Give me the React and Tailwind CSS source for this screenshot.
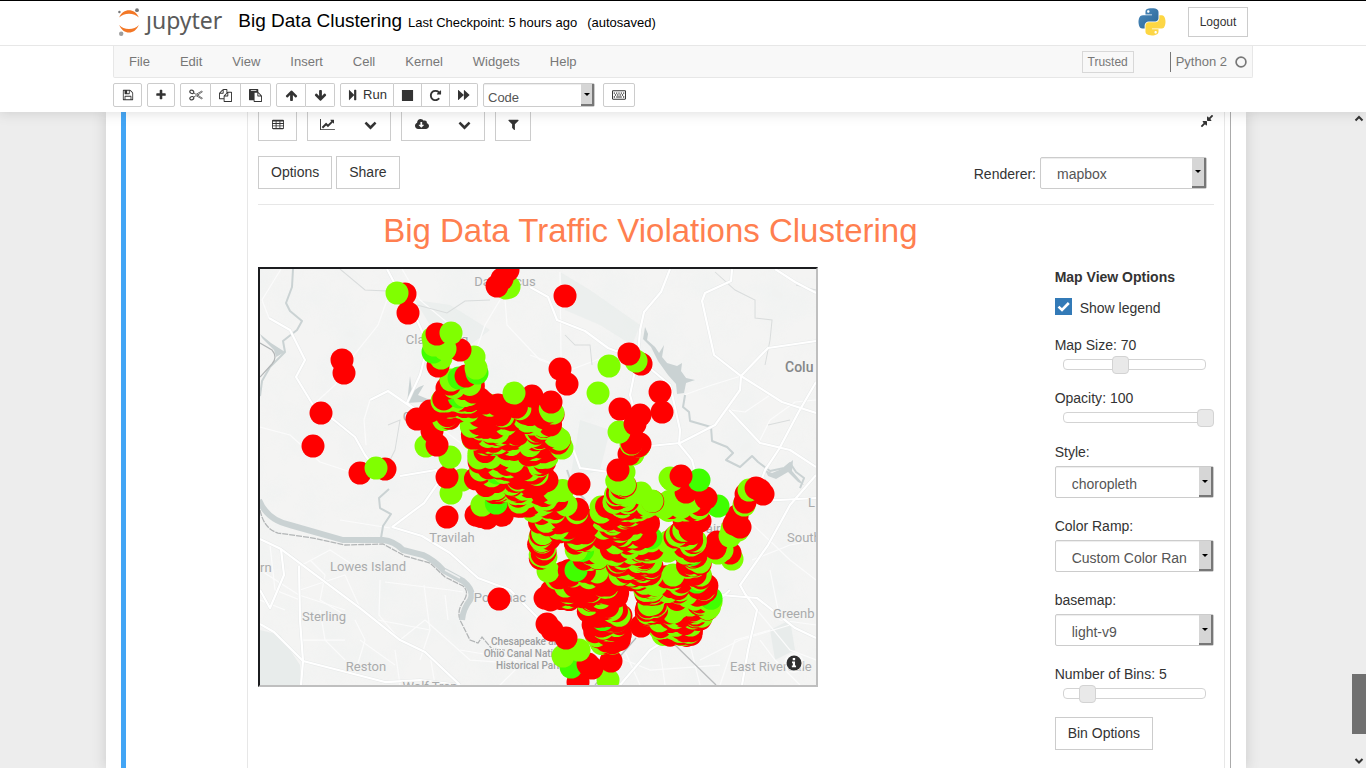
import React, { useState } from "react";
import { FaCloudDownloadAlt, FaCompressAlt, FaRegKeyboard } from "react-icons/fa";

/* ---------- icons ---------- */

const PATHS = {
  save: "M512 1536h768v-384h-768v384zm896 0h128v-896q0-14-10-38.5t-20-34.5l-281-281q-10-10-34-20t-39-10v416q0 40-28 68t-68 28h-576q-40 0-68-28t-28-68v-416h-128v1280h128v-416q0-40 28-68t68-28h832q40 0 68 28t28 68v416zm-384-928v-320q0-13-9.5-22.5t-22.5-9.5h-192q-13 0-22.5 9.5t-9.5 22.5v320q0 13 9.5 22.5t22.5 9.5h192q13 0 22.5-9.5t9.5-22.5zm640 32v928q0 40-28 68t-68 28h-1344q-40 0-68-28t-28-68v-1344q0-40 28-68t68-28h928q40 0 88 20t76 48l280 280q28 28 48 76t20 88z",
  plus: "M1600 736v192q0 40-28 68t-68 28h-416v416q0 40-28 68t-68 28h-192q-40 0-68-28t-28-68v-416h-416q-40 0-68-28t-28-68v-192q0-40 28-68t68-28h416v-416q0-40 28-68t68-28h192q40 0 68 28t28 68v416h416q40 0 68 28t28 68z",
  copy: "M1696 384q40 0 68 28t28 68v1216q0 40-28 68t-68 28h-960q-40 0-68-28t-28-68v-288h-544q-40 0-68-28t-28-68v-672q0-40 20-88t48-76l408-408q28-28 76-48t88-20h416q40 0 68 28t28 68v328q68-40 128-40h416zm-544 213l-299 299h299v-299zm-640-384l-299 299h299v-299zm196 647l316-316v-416h-384v416q0 40-28 68t-68 28h-416v640h512v-256q0-40 20-88t48-76zm956 804v-1152h-384v416q0 40-28 68t-68 28h-416v640h896z",
  paste: "M768 1664h896v-640h-416q-40 0-68-28t-28-68v-416h-384v1152zm256-1440v-64q0-13-9.5-22.5t-22.5-9.5h-704q-13 0-22.5 9.5t-9.5 22.5v64q0 13 9.5 22.5t22.5 9.5h704q13 0 22.5-9.5t9.5-22.5zm256 672h299l-299-299v299zm512 128v672q0 40-28 68t-68 28h-960q-40 0-68-28t-28-68v-160h-544q-40 0-68-28t-28-68v-1344q0-40 28-68t68-28h1088q40 0 68 28t28 68v328q21 13 36 28l408 408q28 28 48 76t20 88z",
  up: "M1675 971q0 51-37 90l-75 75q-38 38-91 38-54 0-90-38l-294-293v704q0 52-37.5 84.5t-90.5 32.5h-128q-53 0-90.5-32.5t-37.5-84.5v-704l-294 293q-36 38-90 38t-90-38l-75-75q-38-38-38-90 0-53 38-91l651-651q35-37 90-37 54 0 91 37l651 651q37 39 37 91z",
  down: "M1675 832q0 53-37 90l-651 652q-39 37-91 37-53 0-90-37l-651-652q-38-36-38-90 0-53 38-91l74-75q39-37 91-37 53 0 90 37l294 294v-704q0-52 38-90t90-38h128q52 0 90 38t38 90v704l294-294q37-37 90-37 52 0 91 37l75 75q37 39 37 91z",
  step: "M350 150L1060 860V192q0-64 64-64h200q64 0 64 64v1408q0 64-64 64h-200q-64 0-64-64V932L350 1642q-60 50-60-20V170q0-70 60-20z",
  stop: "M1664 192v1408q0 26-19 45t-45 19h-1408q-26 0-45-19t-19-45v-1408q0-26 19-45t45-19h1408q26 0 45 19t19 45z",
  repeat: "M1664 256v448q0 26-19 45t-45 19h-448q-42 0-59-40-17-39 14-69l138-138q-148-137-349-137-104 0-198.5 40.5t-163.5 109.5-109.5 163.5-40.5 198.5 40.5 198.5 109.5 163.5 163.5 109.5 198.5 40.5q119 0 225-52t179-147q7-10 23-12 15 0 25 9l137 138q9 8 9.5 20.5t-7.5 22.5q-109 132-264 204.5t-327 72.5q-156 0-298-61t-245-164-164-245-61-298 61-298 164-245 245-164 298-61q147 0 284.5 55.5t244.5 156.5l130-129q29-31 70-14 39 17 39 59z",
  forward: "M60 150L880 880V170q0-60 50-20L1700 850q50 46 0 92L930 1642q-50 40-50-20V912L60 1642q-60 40-60-20V170q0-60 60-20z",
  table: "M160 256h1472q160 0 160 160v1088q0 160-160 160H160q-160 0-160-160V416q0-160 160-160zM128 540v210h420V540zm548 0v210h440V540zm568 0v210h420V540zM128 878v230h420V878zm548 0v230h440V878zm568 0v230h420V878zM128 1236v260h420v-260zm548 0v260h440v-260zm568 0v260h420v-260z",
  chevron: "M1683 808l-742 741q-19 19-45 19t-45-19l-742-741q-19-19-19-45.5t19-45.5l166-165q19-19 45-19t45 19l531 531 531-531q19-19 45-19t45 19l166 165q19 19 19 45.5t-19 45.5z",
  filter: "M1595 295q17 41-14 70l-493 493v742q0 42-39 59-13 5-25 5-27 0-45-19l-256-256q-19-19-19-45v-486l-493-493q-31-29-14-70 17-39 59-39h1280q42 0 59 39z",
};

function Icon({ name, className = "size-3" }) {
  return (
    <svg viewBox="0 0 1792 1792" className={className} fill="currentColor" fillRule="evenodd" aria-hidden="true">
      <path d={PATHS[name]} />
    </svg>
  );
}

function ScissorsIcon() {
  return (
    <svg viewBox="0 0 14 12" className="h-3 w-[14px]" fill="none" stroke="#444" aria-hidden="true">
      <ellipse cx="2.8" cy="2.8" rx="2" ry="1.6" strokeWidth="1.2" transform="rotate(25 2.8 2.8)" />
      <ellipse cx="2.8" cy="9.2" rx="2" ry="1.6" strokeWidth="1.2" transform="rotate(-25 2.8 9.2)" />
      <path d="M4.6 3.8L7 5.4l5.6-3.2.8.5L8 6.6M4.6 8.2L7 6.6l5.6 3.2.8-.5L8 5.6" strokeWidth=".8" />
    </svg>
  );
}

function LineChartIcon() {
  return (
    <svg viewBox="0 0 2048 1792" className="h-[13px] w-[15px]" fill="currentColor" aria-hidden="true">
      <path d="M2048 1536v128h-2048v-1536h128v1408h1920zm-128-1248v435q0 21-19.5 29.5t-35.5-7.5l-121-121-633 633q-10 10-23 10t-23-10l-233-233-416 416-192-192 585-585q10-10 23-10t23 10l233 233 464-464-121-121q-16-16-7.5-35.5t29.5-19.5h435q14 0 23 9t9 23z" />
    </svg>
  );
}

function JupyterMark() {
  return (
    <svg viewBox="0 0 24 30" className="h-[30px] w-6" aria-hidden="true">
      <path d="M1.2 10.5C3.2 5.6 7 3.2 11 3.2s7.8 2.4 9.8 7.3C18.5 8 15 6.7 11 6.7S3.5 8 1.2 10.5z" fill="#f37726" />
      <path d="M1.2 18C3.2 23 7 25.6 11 25.6s7.8-2.6 9.8-7.6C18.5 20.6 15 22 11 22s-7.5-1.4-9.8-4z" fill="#f37726" />
      <circle cx="19" cy="3.2" r="1.9" fill="#767677" />
      <circle cx="1.4" cy="5" r="1.2" fill="#767677" />
      <circle cx="3.2" cy="26.7" r="2.2" fill="#9e9e9e" />
    </svg>
  );
}

function PythonLogo() {
  return (
    <svg viewBox="12 1 104 106" className="size-7" role="img" aria-label="Python">
      <defs>
        <linearGradient id="pyBlue" x1="0" y1="0" x2="1" y2="1">
          <stop offset="0" stopColor="#4b8bbe" />
          <stop offset="1" stopColor="#2b6595" />
        </linearGradient>
        <linearGradient id="pyYellow" x1="0" y1="0" x2="1" y2="1">
          <stop offset="0" stopColor="#ffd93b" />
          <stop offset="1" stopColor="#fbd44c" />
        </linearGradient>
      </defs>
      <path fill="url(#pyBlue)" d="M63.391 1.988c-4.222.02-8.252.379-11.8 1.007-10.45 1.846-12.346 5.71-12.346 12.837v9.411h24.693v3.137H29.977c-7.176 0-13.46 4.313-15.426 12.521-2.268 9.405-2.368 15.275 0 25.096 1.755 7.311 5.947 12.519 13.124 12.519h8.491V67.234c0-8.151 7.051-15.34 15.426-15.34h24.665c6.866 0 12.346-5.654 12.346-12.548V15.833c0-6.693-5.646-11.72-12.346-12.837-4.244-.706-8.645-1.027-12.866-1.008zM50.037 9.557c2.55 0 4.634 2.117 4.634 4.721 0 2.593-2.083 4.69-4.634 4.69-2.56 0-4.633-2.097-4.633-4.69-.001-2.604 2.073-4.721 4.633-4.721z" />
      <path fill="url(#pyYellow)" d="M91.682 28.38v10.966c0 8.5-7.208 15.655-15.426 15.655H51.591c-6.756 0-12.346 5.783-12.346 12.549v23.515c0 6.691 5.818 10.628 12.346 12.547 7.816 2.297 15.312 2.713 24.665 0 6.216-1.801 12.346-5.423 12.346-12.547v-9.412H63.938v-3.138h37.012c7.176 0 9.852-5.005 12.348-12.519 2.578-7.735 2.467-15.174 0-25.096-1.774-7.145-5.161-12.521-12.348-12.521h-9.268zM77.809 87.927c2.561 0 4.634 2.097 4.634 4.692 0 2.602-2.074 4.719-4.634 4.719-2.55 0-4.633-2.117-4.633-4.719 0-2.595 2.083-4.692 4.633-4.692z" />
    </svg>
  );
}

/* ---------- map ---------- */

const R = "#ff0000";
const G = "#80ff00";
const B = "#40ff00";

// [yTop, yBottom, leftTop, rightTop, leftBottom, rightBottom, count, share of red]
const BANDS = [
  [384, 402, 448, 474, 440, 482, 14, 0.5],
  [398, 420, 440, 488, 432, 500, 30, 0.7],
  [420, 445, 470, 500, 472, 520, 26, 0.7],
  [404, 425, 500, 515, 500, 550, 14, 0.7],
  [408, 430, 548, 554, 535, 552, 14, 0.5],
  [430, 452, 475, 558, 474, 562, 48, 0.55],
  [452, 475, 474, 548, 474, 545, 46, 0.55],
  [475, 495, 470, 545, 475, 555, 36, 0.55],
  [486, 505, 480, 566, 515, 567, 24, 0.65],
  [503, 517, 478, 540, 480, 570, 22, 0.8],
  [517, 560, 535, 550, 540, 550, 26, 0.5],
  [505, 560, 540, 585, 580, 602, 44, 0.55],
  [480, 522, 616, 626, 612, 632, 36, 0.5],
  [505, 530, 600, 650, 600, 648, 34, 0.6],
  [500, 512, 645, 705, 645, 700, 18, 0.35],
  [528, 550, 598, 650, 600, 655, 36, 0.55],
  [550, 580, 612, 650, 615, 640, 40, 0.6],
  [570, 600, 562, 600, 545, 625, 48, 0.88],
  [585, 605, 560, 625, 570, 615, 28, 0.7],
  [548, 580, 638, 652, 640, 652, 44, 0.5],
  [580, 615, 644, 656, 646, 658, 44, 0.55],
  [606, 644, 585, 622, 598, 620, 60, 0.72],
  [610, 636, 648, 706, 664, 690, 56, 0.6],
  [598, 620, 694, 712, 690, 708, 22, 0.65],
  [570, 600, 692, 704, 698, 710, 22, 0.75],
  [530, 572, 680, 694, 688, 702, 34, 0.5],
  [576, 600, 660, 690, 664, 688, 16, 0.5],
];

// Individually placed points: [x, y, colour].
const POINTS = [
  [438, 366, R], [433, 338, G], [433, 352, B], [441, 358, G], [434, 345, G], [445, 349, G],
  [450, 384, R], [455, 400, G], [442, 401, G], [464, 402, G], [430, 411, R], [417, 419, R], [432, 431, R],
  [426, 446, G], [437, 445, R], [450, 457, G], [451, 493, G], [462, 480, G], [447, 477, R], [447, 517, R],
  [476, 515, R], [487, 518, R], [545, 552, R], [548, 571, G], [556, 578, G],
  [545, 598, R], [547, 624, R], [552, 630, R], [566, 638, R], [563, 656, G], [579, 650, G], [571, 667, B],
  [578, 682, R], [588, 664, R], [592, 668, R], [611, 661, R], [608, 680, G],
  [641, 626, R], [641, 493, G], [652, 501, G], [601, 507, G], [601, 512, G], [670, 504, G],
  [668, 542, G], [668, 551, G], [673, 575, G], [686, 510, G], [684, 520, R], [700, 521, R], [690, 529, R], [677, 535, G],
  [675, 537, R], [691, 539, R], [691, 545, G], [692, 551, R], [693, 556, G],
  [718, 506, B], [706, 498, R], [699, 480, B], [670, 478, G], [672, 480, G], [686, 492, R], [681, 476, R],
  [405, 294, R], [408, 313, R], [397, 293, G], [565, 296, R],
  [342, 360, R], [344, 373, R], [321, 413, R], [313, 446, R],
  [360, 473, R], [385, 469, R], [376, 468, G], [499, 599, R],
  [437, 334, R], [460, 350, R], [451, 333, G], [474, 357, G],
  [477, 373, B], [459, 378, B], [451, 380, G], [466, 376, R], [476, 368, G],
  [506, 288, G], [509, 287, G], [497, 286, R], [502, 279, R], [508, 270, R],
  [560, 369, R], [567, 384, R], [532, 396, R], [514, 393, G], [553, 413, G], [551, 402, R],
  [503, 416, G], [498, 405, R], [512, 401, R], [527, 421, G], [532, 424, G], [558, 443, R], [562, 448, G], [579, 484, R],
  [609, 366, G], [598, 393, G], [641, 364, R], [636, 361, G], [629, 354, R],
  [660, 392, R], [662, 412, R], [620, 409, R], [619, 432, G], [640, 415, R], [635, 424, R],
  [640, 444, R], [639, 446, G], [638, 446, R], [633, 454, G], [629, 454, R], [632, 443, R], [631, 444, G], [624, 472, G], [618, 470, R],
  [732, 559, G], [730, 553, R], [718, 553, G], [715, 548, R], [722, 550, G], [738, 530, G], [740, 527, R],
  [717, 542, R], [730, 536, G], [734, 524, R], [732, 529, G], [737, 516, R], [744, 505, G], [745, 502, R],
  [746, 494, R], [749, 490, G], [763, 494, R], [760, 490, R], [756, 488, R],
  [690, 605, G], [679, 607, G],
];

function makeRandom(seed) {
  let s = seed;
  return () => {
    s = (s * 1664525 + 1013904223) % 4294967296;
    return s / 4294967296;
  };
}

// Points are painted from south to north, so the northern ones stay on top.
function buildCluster() {
  const rnd = makeRandom(42);
  const out = [...POINTS];
  BANDS.forEach(([y0, y1, l0, r0, l1, r1, n, red]) => {
    for (let i = 0; i < n; i++) {
      const t = rnd();
      const l = l0 + (l1 - l0) * t;
      const r = r0 + (r1 - r0) * t;
      const c = rnd();
      out.push([l + (r - l) * rnd(), y0 + (y1 - y0) * t, c < red ? R : c > 0.985 ? B : G]);
    }
  });
  return out.sort((a, b) => b[1] - a[1]);
}

const CLUSTER = buildCluster();

const STREAMS = [
  "M293 269L292 287L286 303L290 311L302 321L297 330L283 341L285 352L270 367L262 381L260 396",
  "M685 395L683 407L689 412L690 421L711 427L712 441L727 447L733 453L726 460L740 467L752 456L758 462L770 471L784 468L790 463L796 472L804 478L800 488",
  "M389 489L379 498L380 508L391 514L383 526L381 538",
  "M567 470L572 485L585 500",
];

const HIGHWAYS = [
  "M260 539L281 549L360 608L400 640L425 652L460 685",
  "M260 624L274 632L303 661L350 673L385 682L420 680L460 685",
  "M281 549L284 575L270 608L260 590",
  "M299 566L300 620L303 661L301 685",
  "M269 318L290 330L305 360L296 377L313 405L334 420L355 437L365 455L376 470",
  "M387 269L397 288L417 320L428 345L420 375L407 403L430 420",
  "M530 287L548 297L557 320L585 331L608 348L640 360L670 385L680 430L679 444L692 460L697 480",
  "M670 269L661 292L644 312L640 330L638 355L630 395L640 430",
  "M732 269L731 281L705 293L702 301L714 355L741 376L782 402L816 413",
  "M741 376L740 390L715 425L680 443L650 446L620 450",
  "M741 376L768 348L816 341",
  "M816 382L798 413L779 449L765 470L757 492",
  "M775 269L795 282L816 293",
  "M729 410L760 443L790 450L816 467",
  "M816 475L790 505L768 545L740 585L745 594L757 610L748 650L742 685",
  "M720 595L757 598L795 628L816 638",
  "M740 500L780 500L816 498",
  "M620 685L650 650L690 625L730 590",
  "M392 527L424 503L440 480L436 470L400 476",
  "M392 527L422 536L450 553L478 578L510 590L540 620",
  "M370 400L388 391L430 420",
  "M570 440L580 468L630 475",
];

const MINOR = [
  "M281 269L262 300L269 318",
  "M402 269L420 300L450 325",
  "M500 300L485 325L478 345L470 370",
  "M505 300L507 325L540 360L570 370",
  "M387 300L378 325L350 360L335 385L313 405",
  "M260 427L290 435L320 462L360 475",
  "M370 400L364 420L366 445",
  "M430 420L470 450L500 500",
  "M560 272L561 360",
  "M530 355L570 370L610 355",
  "M340 520L390 528",
  "M816 400L795 402L770 420L760 440",
  "M684 395L712 385L741 376",
  "M730 410L745 412L770 395",
  "M752 560L790 545L816 540",
  "M748 520L790 560L816 580",
  "M300 566L330 550L350 563",
  "M300 590L345 575L360 608",
  "M355 620L365 640L355 673",
  "M260 570L299 595L345 610",
  "M378 620L430 630L420 660",
  "M380 580L379 615L400 640",
  "M424 585L430 630M445 595L448 620M385 582L450 590L463 592",
  "M400 640L425 620L470 660L540 665",
  "M490 640L520 665L500 685M460 650L520 660",
  "M560 640L600 685M620 640L640 685M660 650L665 685M690 645L700 685",
  "M540 655L600 650L650 670L720 665M720 685L735 640L770 630",
  "M770 570L780 620L816 625M757 610L790 650L816 660",
  "M760 640L775 660L800 685M700 660L740 640L790 625",
  "M320 610L325 640L345 660M303 640L345 640",
  "M270 545L275 590L300 600M260 600L285 610",
  "M395 650L400 685M430 655L435 685M360 640L395 665",
  "M310 560L325 575L320 600L345 615",
];

const BORDERS = [
  "M340 269L365 290L387 291M417 305L447 313L465 301L490 300",
  "M715 272L735 290L755 300L755 318L772 320L770 340L765 365",
  "M388 425L400 420L395 450L385 470M565 335L575 345L590 345L592 365",
  "M796 285L816 290M768 425L790 420",
];

const LABELS = [
  [505, 286, "Damascus", 13], [437, 344, "Clarksburg", 13], [452, 542, "Travilah", 13],
  [368, 571, "Lowes Island", 13], [324, 621, "Sterling", 13], [366, 671, "Reston", 13],
  [500, 602, "Potomac", 13], [430, 691, "Wolf Trap", 13], [440, 421, "Germantown", 13], [722, 533, "Fairland", 13],
];

function TrafficMap() {
  return (
    <svg
      viewBox="260 269 556 416"
      className="block h-auto w-full"
      role="img"
      aria-label="Traffic violations map"
      fontFamily="Roboto, 'Noto Sans', sans-serif"
    >
      <defs>
        <filter id="relief" x="0" y="0" width="100%" height="100%">
          <feTurbulence type="fractalNoise" baseFrequency="0.025" numOctaves="3" seed="4" />
          <feColorMatrix values="0 0 0 0 0.86  0 0 0 0 0.885  0 0 0 0 0.88  2.4 0 0 0 -0.95" />
        </filter>
      </defs>
      <rect x="260" y="269" width="556" height="416" fill="#f4f4f3" />
      <rect x="260" y="269" width="556" height="416" filter="url(#relief)" opacity="0.55" />
      <g fill="#e8eceb">
        <path d="M560 272L590 290L640 325L632 345L600 325L565 310z" opacity="0.7" />
        <path d="M415 300L450 305L490 330L470 345L430 325z" opacity="0.7" />
        <path d="M260 630L280 635L300 665L300 685H260z" />
        <path d="M770 630L790 620L795 650L775 660z" />
        <path d="M580 420L610 430L600 470L570 480z" opacity="0.7" />
      </g>
      <g fill="none" stroke="#fbfbfb" strokeWidth="1.2" strokeLinejoin="round">
        {MINOR.map((d) => <path key={d} d={d} />)}
      </g>
      <g fill="none" stroke="#d9dcdc" strokeWidth="1">
        {BORDERS.map((d) => <path key={d} d={d} />)}
      </g>
      <g fill="none" stroke="#cad2d3" strokeWidth="2" strokeLinejoin="round">
        {STREAMS.map((d) => <path key={d} d={d} />)}
      </g>
      <g fill="#cad2d3">
        <path d="M645 327L648 334L647 340L655 347L659 353L664 345L662 357L667 363L677 366L682 363L681 371L686 378L695 380L686 383L684 393L677 394L676 384L668 375L658 361L651 347L643 339z" />
        <path d="M260 334L271 343L285 352L276 357L274 350L262 338z" />
        <path d="M407 403L410 376L412 392L419 387L424 385L418 395L430 400L422 402z" />
        <path d="M765 470L772 473L784 468L793 460L792 471L804 485L798 482L788 472L776 479L768 476z" />
      </g>
      <path d="M260 510Q264 529 278 533L313 538L345 545L383 544L405 556L430 563L445 577L463 586Q470 592 463 602T461 622L470 640L478 643L482 637L492 649L505 650" fill="none" stroke="#b2b5b6" strokeWidth="1.3" strokeDasharray="6 1" />
      <path d="M259 500Q267 520 290 525L343 540L383 540Q394 541 403 550L423 555Q434 560 443 570L463 581Q475 591 470 600Q463 609 462 620" fill="none" stroke="#cad2d3" strokeWidth="6" />
      <path d="M445 570L460 578" stroke="#eff0f0" strokeWidth="1.5" />
      <g fill="none" stroke="#e7e9e9" strokeWidth="3.2" strokeLinejoin="round">
        {HIGHWAYS.map((d) => <path key={d} d={d} />)}
      </g>
      <g fill="none" stroke="#ffffff" strokeWidth="2.2" strokeLinejoin="round">
        {HIGHWAYS.map((d) => <path key={d} d={d} />)}
      </g>
      <path d="M675 645L716 685M636 638L595 685" stroke="#b9bbbc" strokeWidth="1.3" />
      <path d="M260 343L272 350Q278 357 272 364L260 377" fill="none" stroke="#b2b5b6" strokeWidth="1.2" />

      <g fill="#a9abac" textAnchor="middle" stroke="#f4f4f3" strokeWidth="2" paintOrder="stroke">
        {LABELS.map(([x, y, t, s]) => <text key={t} x={x} y={y} fontSize={s}>{t}</text>)}
      </g>
      <g fill="#a9abac" stroke="#f4f4f3" strokeWidth="2" paintOrder="stroke" fontSize="13">
        <text x="260" y="572">rn</text>
        <text x="808" y="507">L</text>
        <text x="787" y="542">South</text>
        <text x="773" y="618">Greenb</text>
        <text x="730" y="671">East Riverdale</text>
        <text x="785" y="372" fontSize="14" fontWeight="500" fill="#858788">Colu</text>
      </g>
      <g fill="#9c9ea0" textAnchor="middle" stroke="#f4f4f3" strokeWidth="2" paintOrder="stroke" fontSize="10" fontWeight="500">
        <text x="528" y="645">Chesapeake and</text>
        <text x="528" y="657">Ohio Canal National</text>
        <text x="529" y="669">Historical Park</text>
      </g>

      {CLUSTER.map(([x, y, c], i) => <circle key={i} cx={x} cy={y} r="11.5" fill={c} />)}

      <circle cx="794" cy="663" r="10" fill="#fff" opacity="0.5" />
      <circle cx="794" cy="663" r="7.5" fill="#2f2f2f" />
      <path d="M792 661.5h3v4h1v1.7h-4.2v-1.7h1v-2.4h-.8zM792.7 658h2.4v2.2h-2.4z" fill="#fff" />
    </svg>
  );
}

/* ---------- controls ---------- */

function ToolButton({ label, className, children }) {
  return (
    <button
      type="button"
      aria-label={label}
      className={`flex h-6 items-center justify-center border border-[#ccc] bg-white text-[#333] ${className}`}
    >
      {children}
    </button>
  );
}

function SelectBox({ id, label, options, className, textClass, arrowClass }) {
  return (
    <div className={`relative ${className}`}>
      <select
        id={id}
        aria-label={label}
        className={`block size-full appearance-none overflow-hidden rounded-xs border border-[#ccc] bg-white text-[#555] shadow-[inset_0_1px_1px_rgba(0,0,0,0.075)] ${textClass}`}
      >
        {options.map((o) => <option key={o}>{o}</option>)}
      </select>
      <span
        aria-hidden="true"
        className={`pointer-events-none absolute inset-y-px right-px flex items-center justify-center border-r-2 border-b-2 border-[#777] bg-[#d6d6d6] ${arrowClass}`}
      >
        <svg viewBox="0 0 6 3" className="h-[3px] w-[6px]"><path d="M0 0h6L3 3z" /></svg>
      </span>
    </div>
  );
}

const FIELD_TEXT = "pt-1 pr-[26px] pl-4 text-[14px]";

function SelectField({ id, label, options }) {
  return (
    <div className="flex flex-col gap-1">
      <label htmlFor={id} className="leading-5">{label}</label>
      <SelectBox id={id} options={options} className="h-8" textClass={FIELD_TEXT} arrowClass="w-[14px]" />
    </div>
  );
}

function SliderField({ id, label, value, max, text }) {
  const [current, setCurrent] = useState(value);
  return (
    <div className="flex flex-col">
      <label htmlFor={id} className="leading-5">{label}: {text(current)}</label>
      <div className="grid h-[19px] items-center">
        <span className="col-start-1 row-start-1 mx-2 h-[11px] rounded-[4px] border border-[#d3d3d3] bg-white" />
        <input
          id={id}
          type="range"
          min="0"
          max={max}
          value={current}
          onChange={(e) => setCurrent(Number(e.target.value))}
          className="col-start-1 row-start-1 h-[19px] w-full appearance-none bg-transparent [&::-webkit-slider-thumb]:h-[18px] [&::-webkit-slider-thumb]:w-[17px] [&::-webkit-slider-thumb]:appearance-none [&::-webkit-slider-thumb]:rounded-[4px] [&::-webkit-slider-thumb]:border [&::-webkit-slider-thumb]:border-[#d3d3d3] [&::-webkit-slider-thumb]:bg-[#e9e9e9]"
        />
      </div>
    </div>
  );
}

/* ---------- page sections ---------- */

const MENU = ["File", "Edit", "View", "Insert", "Cell", "Kernel", "Widgets", "Help"];

function Header() {
  return (
    <header className="relative z-10 border-t border-black bg-white pb-[5px] shadow-[0_0_12px_1px_rgba(87,87,87,0.2)]">
      <div className="border-b border-[#e7e7e7]">
        <div className="mx-auto flex h-11 max-w-[1140px] items-center pr-[5px] pb-[3px] pl-[5px]">
          <a href="#home" className="flex h-9 items-center gap-1 text-[#5a5a5a]" aria-label="jupyter">
            <JupyterMark />
            <span className="pb-1 font-['Noto_Sans',sans-serif] text-[23px] leading-8">ȷupyter</span>
          </a>
          <div className="ml-4 flex items-baseline text-black">
            <h1 className="text-[19px]">Big Data Clustering</h1>
            <span className="ml-[6px] text-[13px]">Last Checkpoint: 5 hours ago</span>
            <span className="ml-[10px] text-[13px]">(autosaved)</span>
          </div>
          <div className="ml-auto flex items-center gap-[22px]">
            <PythonLogo />
            <button type="button" className="h-[30px] w-[60px] border border-[#ccc] bg-white text-[12px] text-[#333]">Logout</button>
          </div>
        </div>
      </div>
      <div className="mx-auto max-w-[1140px]">
        <nav className="flex h-8 items-center rounded-b-xs border border-t-0 border-[#e7e7e7] bg-[#f8f8f8] text-[13px] text-[#777]">
          {MENU.map((m) => <a key={m} href={`#${m.toLowerCase()}`} className="px-[15px] pt-px">{m}</a>)}
          <span className="ml-auto flex h-[22px] w-[52px] items-center justify-center border border-[#d8d8d8] text-[12px]">Trusted</span>
          <span className="ml-9 flex h-5 items-center gap-2 border-l border-[#777] pr-[5px] pl-[5px]">
            Python 2
            <svg viewBox="0 0 12 12" className="size-3" aria-hidden="true"><circle cx="6" cy="6" r="4.9" fill="none" stroke="#777" strokeWidth="1.7" /></svg>
          </span>
        </nav>
        <div className="mt-[5px] flex items-center gap-[5px]">
          <ToolButton label="Save" className="w-[29px] rounded-xs"><Icon name="save" /></ToolButton>
          <ToolButton label="Insert cell" className="w-7 rounded-xs"><Icon name="plus" /></ToolButton>
          <div className="flex">
            <ToolButton label="Cut" className="w-[31px] rounded-l-xs"><ScissorsIcon /></ToolButton>
            <ToolButton label="Copy" className="w-[30px] border-l-0"><Icon name="copy" className="size-[13px]" /></ToolButton>
            <ToolButton label="Paste" className="w-[30px] rounded-r-xs border-l-0"><Icon name="paste" className="size-[13px]" /></ToolButton>
          </div>
          <div className="flex">
            <ToolButton label="Move up" className="w-[30px] rounded-l-xs"><Icon name="up" className="size-[13px]" /></ToolButton>
            <ToolButton label="Move down" className="w-[29px] rounded-r-xs border-l-0"><Icon name="down" className="size-[13px]" /></ToolButton>
          </div>
          <div className="flex">
            <ToolButton label="Run" className="w-[54px] gap-1 rounded-l-xs text-[13px]"><Icon name="step" />Run</ToolButton>
            <ToolButton label="Stop" className="w-7 border-l-0"><Icon name="stop" className="size-[13px]" /></ToolButton>
            <ToolButton label="Restart" className="w-7 border-l-0"><Icon name="repeat" className="size-[13px]" /></ToolButton>
            <ToolButton label="Restart and run all" className="w-7 rounded-r-xs border-l-0"><Icon name="forward" /></ToolButton>
          </div>
          <SelectBox label="Cell type" options={["Code", "Markdown"]} className="h-6 w-28" textClass="pt-1 pl-1 text-[13px]" arrowClass="w-[13px]" />
          <ToolButton label="Command palette" className="ml-[3px] w-8 rounded-xs"><FaRegKeyboard className="size-[14px]" /></ToolButton>
        </div>
      </div>
    </header>
  );
}

const OUTLINE = "h-[33px] border border-[#ccc] bg-white px-3 text-[#333]";
const TAB = "flex h-[29px] border border-t-0 border-[#ccc] bg-white pb-1 text-[#333]";

function ChartToolbar() {
  return (
    <div className="flex gap-[10px]">
      <button type="button" aria-label="Table" className={`${TAB} w-[39px] items-center justify-center`}><Icon name="table" /></button>
      <div className={TAB}>
        <button type="button" aria-label="Chart" className="flex w-[39px] items-center justify-center"><LineChartIcon /></button>
        <button type="button" aria-label="Chart menu" className="flex w-[43px] items-center justify-center pl-1"><Icon name="chevron" className="size-[13px]" /></button>
      </div>
      <div className={TAB}>
        <button type="button" aria-label="Download" className="flex w-[39px] items-center justify-center"><FaCloudDownloadAlt className="size-[14px]" /></button>
        <button type="button" aria-label="Download menu" className="flex w-[43px] items-center justify-center pl-1"><Icon name="chevron" className="size-[13px]" /></button>
      </div>
      <button type="button" aria-label="Filter" className={`${TAB} w-9 items-center justify-center`}><Icon name="filter" className="size-[13px]" /></button>
      <button type="button" aria-label="Collapse" className="ml-auto flex h-[18px] items-center text-[#333]"><FaCompressAlt className="size-[14px]" /></button>
    </div>
  );
}

function MapOptions() {
  return (
    <form className="flex flex-col text-[14px] text-[#333]">
      <h3 className="text-[14px] leading-5 font-bold">Map View Options</h3>
      <label className="mt-[11px] flex h-5 items-center gap-2">
        <span className="grid size-[17px] self-start">
          <input type="checkbox" defaultChecked className="peer col-start-1 row-start-1 size-[17px] appearance-none border border-[#ccc] checked:border-[#337ab7] checked:bg-[#337ab7]" />
          <svg viewBox="0 0 17 17" className="pointer-events-none col-start-1 row-start-1 size-[17px] opacity-0 peer-checked:opacity-100" aria-hidden="true">
            <path d="M3.5 8.6L7 12l6.8-7" fill="none" stroke="#fff" strokeWidth="2.6" />
          </svg>
        </span>
        Show legend
      </label>
      <div className="mt-[17px] flex flex-col gap-[14px]">
        <SliderField id="map-size" label="Map Size" value={40} max="100" text={(v) => v + 30} />
        <SliderField id="opacity" label="Opacity" value={100} max="100" text={(v) => v} />
      </div>
      <div className="mt-[15px] flex flex-col gap-[18px]">
        <SelectField id="style" label="Style:" options={["choropleth", "simple"]} />
        <SelectField id="ramp" label="Color Ramp:" options={["Custom Color Range", "Default"]} />
        <SelectField id="basemap" label="basemap:" options={["light-v9", "dark-v9"]} />
        <SliderField id="bins" label="Number of Bins" value={5} max="29" text={(v) => v} />
      </div>
      <button type="button" className={`${OUTLINE} mt-[14px] self-start`}>Bin Options</button>
    </form>
  );
}

function Output() {
  return (
    <section className="px-[10px]">
      <ChartToolbar />
      <div className="mt-[15px] flex items-center gap-1 border-b border-[#e7e7e7] pb-[15px] text-[14px] text-[#333]">
        <button type="button" className={OUTLINE}>Options</button>
        <button type="button" className={OUTLINE}>Share</button>
        <label htmlFor="renderer" className="ml-auto pt-1">Renderer:</label>
        <SelectBox id="renderer" options={["mapbox", "matplotlib"]} className="mr-[7px] h-8 w-[167px]" textClass={FIELD_TEXT} arrowClass="w-[14px]" />
      </div>
      <h2 className="w-5/6 pt-[5px] pr-3 text-center text-[33px] leading-[42px] text-[#ff7f50]">Big Data Traffic Violations Clustering</h2>
      <div className="mt-[15px] grid grid-cols-[5fr_1fr] items-start">
        <div className="w-[70.3%] border-2 border-t-[#1b1c1f] border-r-[#bfbfbf] border-b-[#bfbfbf] border-l-[#1b1c1f]">
          <TrafficMap />
        </div>
        <MapOptions />
      </div>
    </section>
  );
}

function ScrollRail() {
  return (
    <div aria-hidden="true" className="flex w-[14px] shrink-0 flex-col items-center justify-between bg-[#ededed] text-[#333]">
      <svg viewBox="0 0 14 14" className="size-[14px]"><path d="M3.5 8.5L7 5l3.500 3.5" fill="none" stroke="currentColor" strokeWidth="2" /></svg>
      <div className="flex w-full grow flex-col justify-end pb-5">
        <div className="h-[60px] w-full bg-[#707070]" />
      </div>
      <svg viewBox="0 0 14 14" className="size-[14px]"><path d="M3.5 5L7 8.500L10.5 5" fill="none" stroke="currentColor" strokeWidth="2" /></svg>
    </div>
  );
}

export default function App() {
  return (
    <div className="flex h-screen flex-col overflow-hidden bg-[#ededed] font-['Liberation_Sans',Arial,sans-serif]">
      <Header />
      <div className="flex min-h-0 grow">
        <main className="flex grow justify-center overflow-hidden">
          <div className="flex w-full max-w-[1140px] bg-white px-[15px] shadow-[0_0_12px_1px_rgba(87,87,87,0.2)]">
            <div className="flex min-w-0 grow border-r border-[#ababab]">
              <div className="w-[5px] shrink-0 bg-[#42a5f5]" />
              <div className="w-[121px] shrink-0" />
              <div className="mr-[5px] min-w-0 grow border-x border-[#e7e7e7]">
                <Output />
              </div>
            </div>
          </div>
        </main>
        <ScrollRail />
      </div>
    </div>
  );
}
